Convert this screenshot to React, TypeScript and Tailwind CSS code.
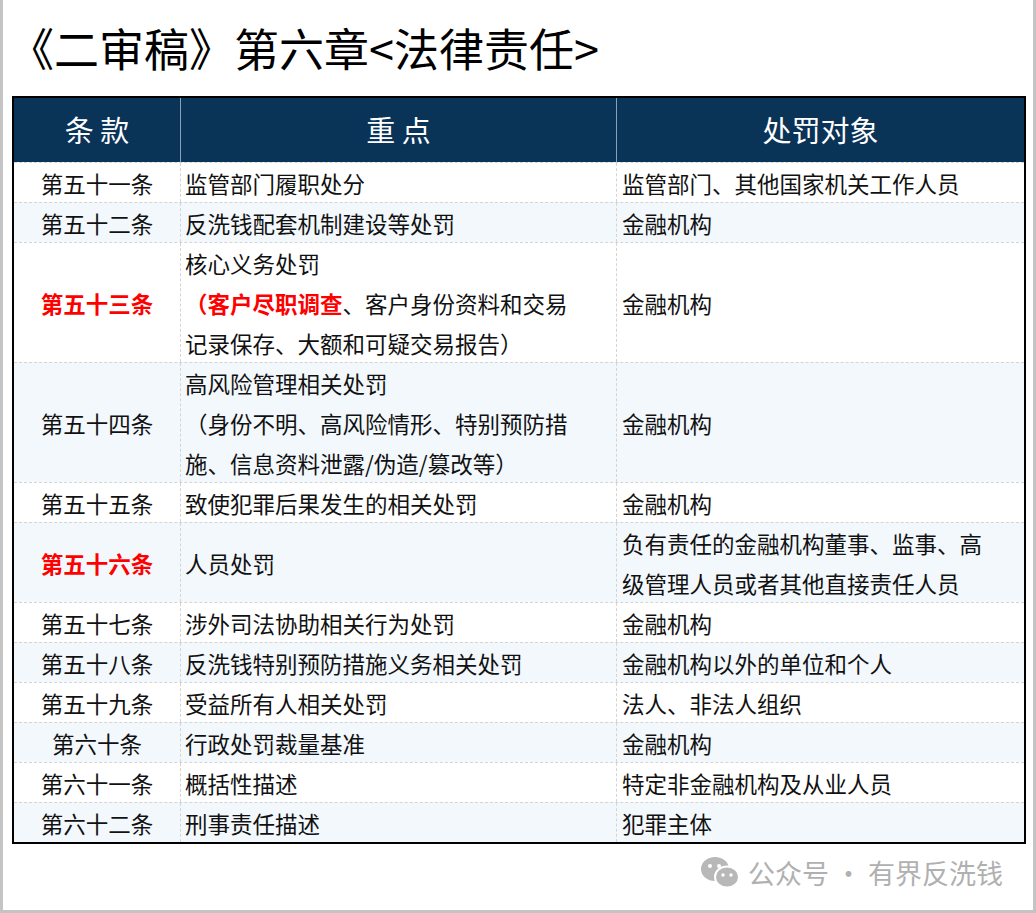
import React from "react";

type Row = { a: string; red?: boolean; b: React.ReactNode; c: React.ReactNode; h: number };

const rows: Row[] = [
  { a: "第五十一条", b: "监管部门履职处分", c: "监管部门、其他国家机关工作人员", h: 40 },
  { a: "第五十二条", b: "反洗钱配套机制建设等处罚", c: "金融机构", h: 40 },
  {
    a: "第五十三条", red: true, h: 120,
    b: (<>核心义务处罚<br /><span className="text-[#ff0000] font-bold">（客户尽职调查</span>、客户身份资料和交易<br />记录保存、大额和可疑交易报告）</>),
    c: "金融机构",
  },
  {
    a: "第五十四条", h: 120,
    b: (<>高风险管理相关处罚<br />（身份不明、高风险情形、特别预防措<br />施、信息资料泄露/伪造/篡改等）</>),
    c: "金融机构",
  },
  { a: "第五十五条", b: "致使犯罪后果发生的相关处罚", c: "金融机构", h: 40 },
  { a: "第五十六条", red: true, b: "人员处罚", c: (<>负有责任的金融机构董事、监事、高<br />级管理人员或者其他直接责任人员</>), h: 80 },
  { a: "第五十七条", b: "涉外司法协助相关行为处罚", c: "金融机构", h: 40 },
  { a: "第五十八条", b: "反洗钱特别预防措施义务相关处罚", c: "金融机构以外的单位和个人", h: 40 },
  { a: "第五十九条", b: "受益所有人相关处罚", c: "法人、非法人组织", h: 40 },
  { a: "第六十条", b: "行政处罚裁量基准", c: "金融机构", h: 40 },
  { a: "第六十一条", b: "概括性描述", c: "特定非金融机构及从业人员", h: 40 },
  { a: "第六十二条", b: "刑事责任描述", c: "犯罪主体", h: 40 },
];

export default function App() {
  const font = { fontFamily: '"Noto Sans CJK SC", sans-serif' };
  return (
    <div className="w-[1036px] h-[913px] bg-white border-[3px] border-t-0 border-[#c4c4c4] box-border relative" style={font}>
      <div className="h-[96px] pl-[6px] pt-[20px] text-[45px] leading-[56px] text-black">《二审稿》第六章&lt;法律责任&gt;</div>
      <div className="ml-[9px] w-[1014px] border-[2px] border-black">
        <div className="flex h-[64px] bg-[#0a3358] text-white text-[29px]">
          <div className="w-[167px] flex items-center justify-center border-r border-[#8aa0b8]">条 款</div>
          <div className="w-[436px] flex items-center justify-center border-r border-[#8aa0b8]">重 点</div>
          <div className="flex-1 flex items-center justify-center">处罚对象</div>
        </div>
        {rows.map((r, i) => (
          <div key={i} className={`flex text-[22.5px] leading-[40px] text-[#111] border-t border-dashed border-[#d4d4d4] ${i % 2 ? "bg-[#f3f8fd]" : "bg-white"}`} style={{ height: r.h }}>
            <div className={`w-[167px] flex items-center justify-center border-r border-dashed border-[#d4d4d4] ${r.red ? "text-[#ff0000] font-bold" : ""}`}>{r.a}</div>
            <div className="w-[436px] flex items-center px-[4px] border-r border-dashed border-[#d4d4d4] whitespace-nowrap">
              <div>{r.b}</div>
            </div>
            <div className="flex-1 flex items-center px-[5px] whitespace-nowrap">
              <div>{r.c}</div>
            </div>
          </div>
        ))}
      </div>
      <div className="absolute right-[30px] top-[853px] flex items-center gap-[8px] text-[#b0b0b0] text-[27px]">
        <svg width="40" height="34" viewBox="0 0 40 34">
          <ellipse cx="15" cy="13" rx="14" ry="12" fill="#b8b8b8" />
          <ellipse cx="27" cy="21" rx="12" ry="10.5" fill="#b8b8b8" stroke="#fff" strokeWidth="2" />
          <circle cx="10" cy="10" r="2" fill="#fff" />
          <circle cx="19" cy="10" r="2" fill="#fff" />
          <circle cx="23" cy="19" r="1.7" fill="#fff" />
          <circle cx="31" cy="19" r="1.7" fill="#fff" />
        </svg>
        <span>公众号 · 有界反洗钱</span>
      </div>
    </div>
  );
}
